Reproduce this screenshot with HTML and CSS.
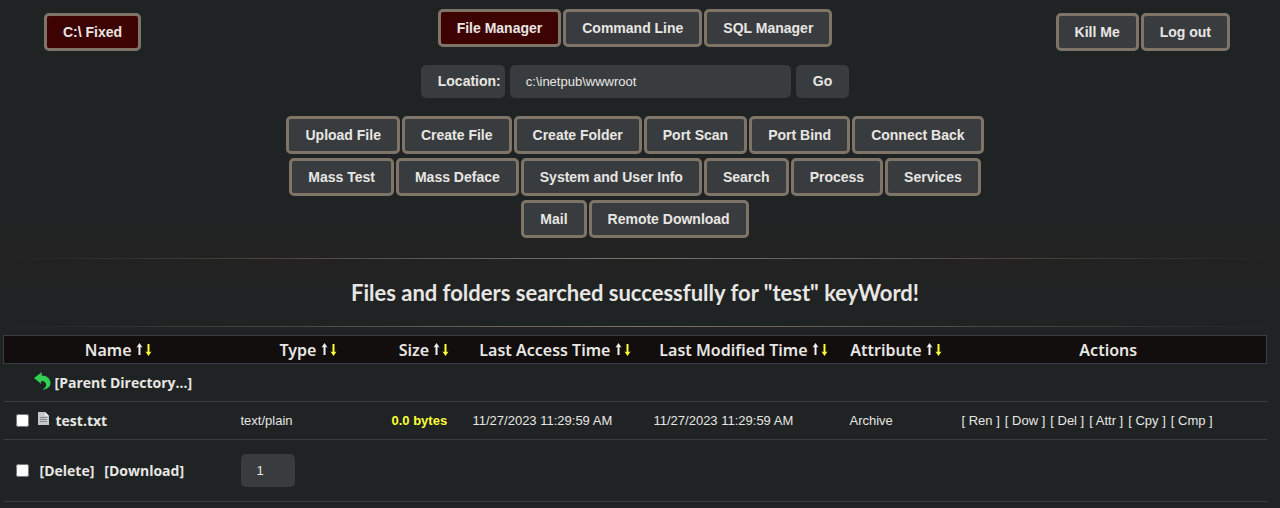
FILE: index.html
```html
<!DOCTYPE html>
<html lang="en">

<head>
    <meta charset="UTF-8">
    <meta name="viewport" content="width=device-width, initial-scale=1.0">
    <title>File Manager</title>
    <link rel="stylesheet" href="styles.css">
</head>

<body>

    <!-- Arrow shapes shared by the sortable columns -->
    <svg class="symbols" aria-hidden="true">
        <symbol id="sort" viewBox="0 0 16 13">
            <path fill="#f0f0f0" d="M3.5 0 L6.5 4.5 L4.5 4 V12 H2.5 V4 L0.5 4.5 Z"/>
            <path fill="#ffff33" d="M12.5 13 L9.5 8.5 L11.5 9 V1 H13.5 V9 L15.5 8.5 Z"/>
        </symbol>
    </svg>

    <header class="header">
        <div class="drives">
            <button class="btn active">C:\ Fixed</button>
        </div>

        <div class="center">
            <nav class="buttons">
                <button class="btn active">File Manager</button>
                <button class="btn">Command Line</button>
                <button class="btn">SQL Manager</button>
            </nav>

            <form class="location">
                <label for="location">Location:</label>
                <input type="text" id="location" value="c:\inetpub\wwwroot">
                <button type="button">Go</button>
            </form>

            <div class="buttons">
                <button class="btn">Upload File</button>
                <button class="btn">Create File</button>
                <button class="btn">Create Folder</button>
                <button class="btn">Port Scan</button>
                <button class="btn">Port Bind</button>
                <button class="btn">Connect Back</button>
                <button class="btn">Mass Test</button>
                <button class="btn">Mass Deface</button>
                <button class="btn">System and User Info</button>
                <button class="btn">Search</button>
                <button class="btn">Process</button>
                <button class="btn">Services</button>
                <button class="btn">Mail</button>
                <button class="btn">Remote Download</button>
            </div>
        </div>

        <div class="session">
            <button class="btn">Kill Me</button>
            <button class="btn">Log out</button>
        </div>
    </header>

    <hr>
    <h1 class="message">Files and folders searched successfully for "test" keyWord!</h1>
    <hr>

    <table class="files">
        <colgroup>
            <col class="col-name">
            <col class="col-type">
            <col class="col-size">
            <col class="col-access">
            <col class="col-modified">
            <col class="col-attribute">
            <col>
        </colgroup>
        <thead>
            <tr>
                <th>Name <svg class="sort"><use href="#sort"/></svg></th>
                <th>Type <svg class="sort"><use href="#sort"/></svg></th>
                <th>Size <svg class="sort"><use href="#sort"/></svg></th>
                <th>Last Access Time <svg class="sort"><use href="#sort"/></svg></th>
                <th>Last Modified Time <svg class="sort"><use href="#sort"/></svg></th>
                <th>Attribute <svg class="sort"><use href="#sort"/></svg></th>
                <th>Actions</th>
            </tr>
        </thead>
        <tbody>
            <tr>
                <td colspan="7">
                    <a class="parent" href="#">
                        <svg class="back" viewBox="0 0 17 18" aria-hidden="true">
                            <path fill="#2fd04f" d="M0 6 L8 0 L7.5 3.5 C13 3.5 16.5 7 16.5 11 C16.5 15 13 17.5 8.5 17.5 C11.5 16 12.5 14 12 12 C11.5 9.8 9.5 8.8 7 9 L7.3 12 Z"/>
                        </svg>
                        [Parent Directory...]
                    </a>
                </td>
            </tr>
            <tr>
                <td>
                    <div class="entry">
                        <input type="checkbox" aria-label="Select test.txt">
                        <svg class="file" viewBox="0 0 11 13" aria-hidden="true">
                            <path fill="#c3c7ca" d="M0 0 H7 L11 4 V13 H0 Z"/>
                            <path fill="#eceeef" d="M7 0 V4 H11 Z"/>
                            <path stroke="#85898c" d="M2 5.5 H9 M2 7.5 H9 M2 9.5 H9"/>
                        </svg>
                        <a href="#">test.txt</a>
                    </div>
                </td>
                <td>text/plain</td>
                <td class="size">0.0 bytes</td>
                <td>11/27/2023 11:29:59 AM</td>
                <td>11/27/2023 11:29:59 AM</td>
                <td>Archive</td>
                <td>
                    <div class="actions">
                        <a href="#">[ Ren ]</a>
                        <a href="#">[ Dow ]</a>
                        <a href="#">[ Del ]</a>
                        <a href="#">[ Attr ]</a>
                        <a href="#">[ Cpy ]</a>
                        <a href="#">[ Cmp ]</a>
                    </div>
                </td>
            </tr>
            <tr class="bulk">
                <td>
                    <div class="entry">
                        <input type="checkbox" aria-label="Select all">
                        <a class="first" href="#">[Delete]</a>
                        <a href="#">[Download]</a>
                    </div>
                </td>
                <td colspan="6"><input class="count" type="text" value="1" aria-label="Count"></td>
            </tr>
        </tbody>
    </table>

</body>

</html>
```

FILE: styles.css
```css
* {
    box-sizing: border-box;
}

body {
    margin: 0;
    background: linear-gradient(#1f2324 180px, #222222 245px, #222222 275px, #1f2324 310px) #1f2324;
    color: #e8e6e3;
    font-family: "Liberation Sans", Arial, sans-serif;
    font-size: 13px;
}

a {
    color: inherit;
    text-decoration: none;
}

.symbols {
    display: none;
}

.header {
    display: grid;
    grid-template-columns: 1fr 720px 1fr;
    margin-right: 10px;
    padding-top: 9px;
}

.drives,
.session {
    display: flex;
    align-items: flex-start;
    gap: 2px;
    padding-top: 4px;
}

.drives {
    padding-left: 44px;
}

.session {
    justify-content: flex-end;
    padding-right: 40px;
}

.buttons {
    display: flex;
    flex-wrap: wrap;
    justify-content: center;
    gap: 4px 2px;
}

.btn {
    height: 38px;
    padding: 0 16px;
    border: 3px solid #7f7468;
    border-radius: 5px;
    background-color: #383c3f;
    color: #e8e6e3;
    font: bold 14px "Liberation Sans", Arial, sans-serif;
    white-space: nowrap;
    cursor: pointer;
}

.active {
    background-color: #3d0303;
}

.location {
    display: flex;
    justify-content: center;
    gap: 5px;
    margin: 18px 0;
}

.location label,
.location input,
.location button,
.count {
    height: 33px;
    border: none;
    border-radius: 5px;
    background-color: #383c3f;
    color: #e8e6e3;
    font: 13px "Liberation Sans", Arial, sans-serif;
}

.location label,
.location button {
    font-size: 14px;
    font-weight: bold;
    line-height: 33px;
}

.location label {
    padding: 0 4px 0 17px;
}

.location input {
    width: 281px;
    padding: 0 16px;
}

.location button {
    padding: 0 17px;
    cursor: pointer;
}

hr {
    height: 1px;
    margin: 0;
    border: none;
    background: linear-gradient(to right, transparent, #7f7468, transparent);
}

.header + hr {
    margin-top: 20px;
}

.message {
    margin: 0 10px 0 0;
    font: bold 22px/67px Lato, sans-serif;
    text-align: center;
}

.files {
    width: calc(100% - 16px);
    margin: 8px 13px 0 3px;
    border-collapse: collapse;
    table-layout: fixed;
}

.col-name {
    width: 229px;
}

.col-type {
    width: 151px;
}

.col-size {
    width: 81px;
}

.col-access {
    width: 181px;
}

.col-modified {
    width: 196px;
}

.col-attribute {
    width: 109px;
}

.files thead tr {
    height: 28px;
    border: 1px solid #3a3e40;
    background-color: #110e0d;
}

.files th {
    padding: 0;
    font: 600 16px/20px "Noto Sans", sans-serif;
    white-space: nowrap;
}

.sort {
    width: 16px;
    height: 13px;
}

.files tbody tr {
    height: 38px;
    border-bottom: 1px solid #3a3e40;
}

.files tbody .bulk {
    height: 62px;
}

.files td {
    padding: 0 8px;
    white-space: nowrap;
}

.parent,
.entry {
    display: flex;
    align-items: center;
    font: bold 14px/20px "Open Sans", sans-serif;
}

.parent {
    gap: 4px;
    padding-left: 22px;
}

.back {
    width: 17px;
    height: 18px;
    margin-bottom: 4px;
}

.entry {
    gap: 7px;
    padding-left: 4px;
}

.entry input {
    width: 13px;
    height: 13px;
    margin: 0 2px 0 0;
}

.entry .first {
    margin: 0 3px 0 2px;
}

.file {
    width: 11px;
    height: 13px;
    margin-bottom: 4px;
}

.files .size {
    color: #ffff33;
    font-weight: bold;
}

.actions {
    display: flex;
    gap: 5px;
    padding-left: 3px;
}

.count {
    width: 54px;
    padding: 0 16px;
}
```
